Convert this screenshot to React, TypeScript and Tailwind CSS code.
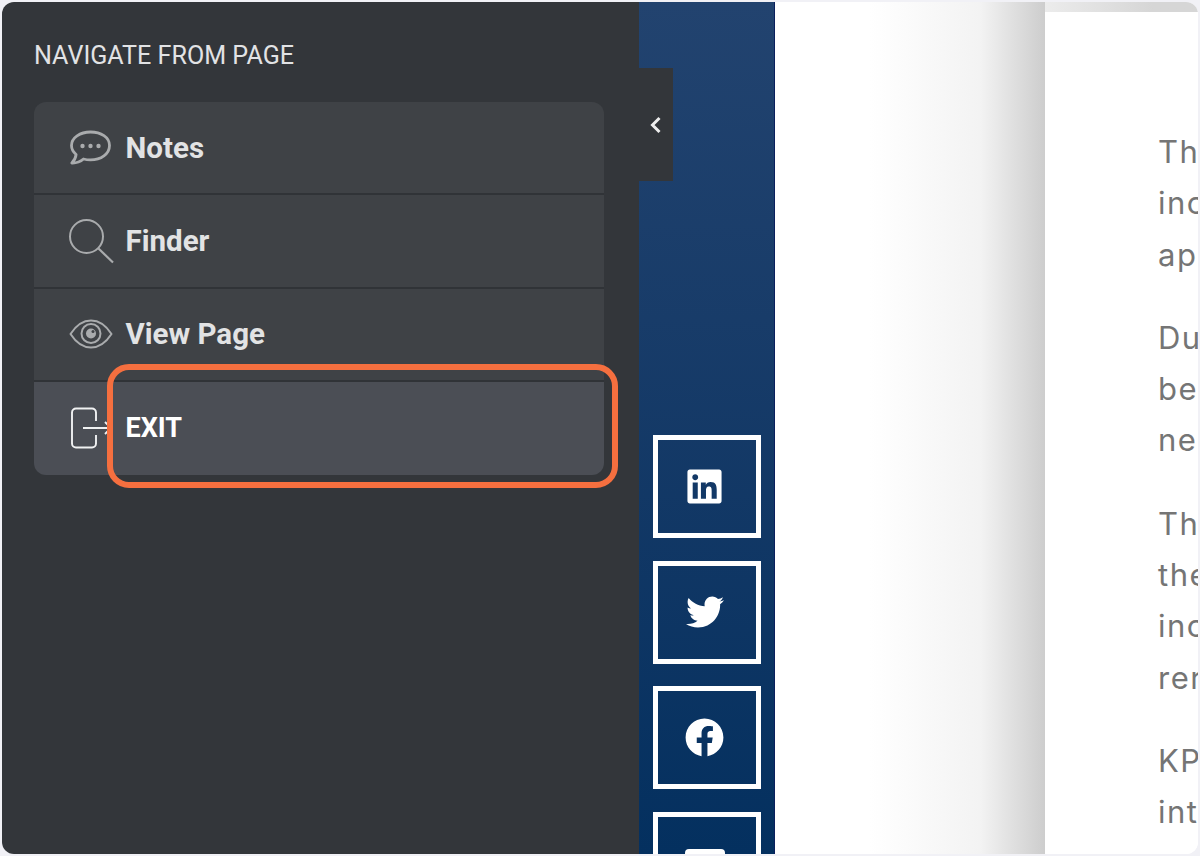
import { ReactNode } from 'react'
import { FaFacebook, FaLinkedin, FaTwitter } from 'react-icons/fa'

function NotesIcon() {
  return (
    <svg width="44" height="36" viewBox="0 0 44 36" fill="none" stroke="#a9abad" strokeWidth="2.800" className="-ml-[2px]">
      <path d="M22.500 2C12 2 3.500 7.800 3.500 15.500c0 3.600 1.800 6.600 4.600 9-.3 3.200-1.800 6-4.300 8.500 4.800.2 8.800-1.500 11.700-4 2.200.6 4.600.9 7 .9 10.500 0 19-6 19-14.400S33 2 22.500 2z" strokeLinejoin="round" />
      <circle cx="14.500" cy="16" r="2.200" fill="#a9abad" stroke="none" />
      <circle cx="22.500" cy="16" r="2.200" fill="#a9abad" stroke="none" />
      <circle cx="30.500" cy="16" r="2.200" fill="#a9abad" stroke="none" />
    </svg>
  )
}

function FinderIcon() {
  return (
    <svg width="46" height="46" viewBox="0 0 46 46" fill="none" stroke="#a9abad" strokeWidth="2" className="-ml-[1px] mt-[2px]">
      <circle cx="17.500" cy="17.500" r="16.500" />
      <path d="M29.500 29.500 44 43.500" strokeWidth="2.200" />
    </svg>
  )
}

function EyeIcon() {
  return (
    <svg width="44" height="30" viewBox="0 0 44 30" fill="none" stroke="#a9abad" strokeWidth="2" className="-ml-[1px]">
      <path d="M1.500 15C7 6.500 14 1.500 22 1.500S37 6.500 42.500 15C37 23.500 30 28.500 22 28.500S7 23.500 1.500 15z" strokeLinejoin="round" />
      <circle cx="22" cy="14.500" r="9.500" />
      <circle cx="22" cy="14.500" r="5" fill="#a9abad" stroke="none" />
      <circle cx="24" cy="12.500" r="1.500" fill="#3f4246" stroke="none" />
    </svg>
  )
}

function ExitIcon() {
  return (
    <svg width="42" height="42" viewBox="0 0 42 42" fill="none" stroke="#f0f1f2" strokeWidth="1.900">
      <path d="M26 14V5.500a4 4 0 0 0-4-4H6a4 4 0 0 0-4 4v31a4 4 0 0 0 4 4h16a4 4 0 0 0 4-4V28" />
      <path d="M13 21h28M35 15l6 6-6 6" />
    </svg>
  )
}

function MailIcon() {
  return (
    <svg width="40" height="30" viewBox="0 0 40 30" className="mt-[2px]">
      <rect width="40" height="30" rx="4" fill="#ffffff" />
      <path d="M3 8l17 11L37 8" fill="none" stroke="#04305f" strokeWidth="2.500" />
    </svg>
  )
}

function MenuRow({ icon, label, active, last }: { icon: ReactNode; label: string; active?: boolean; last?: boolean }) {
  return (
    <div className={`flex h-[93.25px] items-center pl-[36px] ${active ? 'bg-[#4b4e55] text-white' : 'bg-[#3f4246] text-[#e2e3e4]'} ${last ? '' : 'border-b-2 border-[#303337]'}`}>
      <div className="flex w-[55.5px] shrink-0 items-center">{icon}</div>
      <span className={`font-bold ${active ? 'text-[27px]' : 'text-[29.5px]'}`}>{label}</span>
    </div>
  )
}

function SocialBox({ children }: { children: ReactNode }) {
  return (
    <div className="flex h-[103.25px] w-[108px] shrink-0 items-center justify-center border-[5px] border-white pr-[4px] text-white">
      {children}
    </div>
  )
}

const paragraphs = [
  ['The', 'inc', 'ap'],
  ['Du', 'be', 'ne'],
  ['The', 'the', 'inc', 'rer'],
  ['KP', 'int'],
]

export default function App() {
  return (
    <div className="h-[856px] w-[1200px] overflow-hidden bg-[#f1f1f6] p-[2px] font-['Roboto',sans-serif]">
      <div className="relative flex h-[852px] overflow-hidden rounded-[12px] bg-white">
        {/* left panel */}
        <aside className="w-[637px] shrink-0 bg-[#33363a] pl-[32px] pr-[35px] pt-[39px]">
          <h2 className="text-[25.100px] font-normal leading-[30px] text-[#e2e3e5]">NAVIGATE FROM PAGE</h2>
          <div className="mt-[31px] overflow-hidden rounded-[12px]">
            <MenuRow icon={<NotesIcon />} label="Notes" />
            <MenuRow icon={<FinderIcon />} label="Finder" />
            <MenuRow icon={<EyeIcon />} label="View Page" />
            <MenuRow icon={<ExitIcon />} label="EXIT" active last />
          </div>
        </aside>

        {/* social column */}
        <div className="flex w-[136px] shrink-0 flex-col items-center gap-[22.250px] border-r border-[#0a1f5c] bg-gradient-to-b from-[#22436f] to-[#04305f] pt-[433px]">
          <SocialBox><FaLinkedin size={39} /></SocialBox>
          <SocialBox><FaTwitter size={38} /></SocialBox>
          <SocialBox><FaFacebook size={39} /></SocialBox>
          <SocialBox><MailIcon /></SocialBox>
        </div>

        {/* page behind */}
        <div className="flex min-w-0 flex-1">
          <div className="w-[270px] shrink-0 bg-gradient-to-r from-white from-[35%] via-[#f3f3f3] via-[76%] to-[#cdcdcd]" />
          <div className="flex min-w-0 flex-1 flex-col">
            <div className="h-[10px] shrink-0 bg-gradient-to-r from-[#ececec] to-[#d6d6d6] to-[70%]" />
            <div className="flex-1 overflow-hidden bg-white pl-[113px] pt-[114px] font-['Inter',sans-serif] text-[31px] font-normal leading-[51.300px] tracking-[1.500px] text-[#757575]">
              {paragraphs.map((lines, i) => (
                <div key={i} className="mb-[32px] whitespace-nowrap">
                  {lines.map(line => <div key={line}>{line}</div>)}
                </div>
              ))}
            </div>
          </div>
        </div>

        {/* collapse tab */}
        <div className="absolute left-[637px] top-[66px] flex h-[113px] w-[34px] items-center justify-center bg-[#33363a]">
          <svg width="13" height="18" viewBox="0 0 13 18" fill="none" stroke="#eeeeee" strokeWidth="3" className="-ml-[1px]">
            <path d="M10.500 2 3.500 9l7 7" />
          </svg>
        </div>

        {/* highlight */}
        <div className="absolute left-[105px] top-[362px] h-[124px] w-[511px] rounded-[22px] border-[6px] border-[#f56f3f]" />
      </div>
    </div>
  )
}
